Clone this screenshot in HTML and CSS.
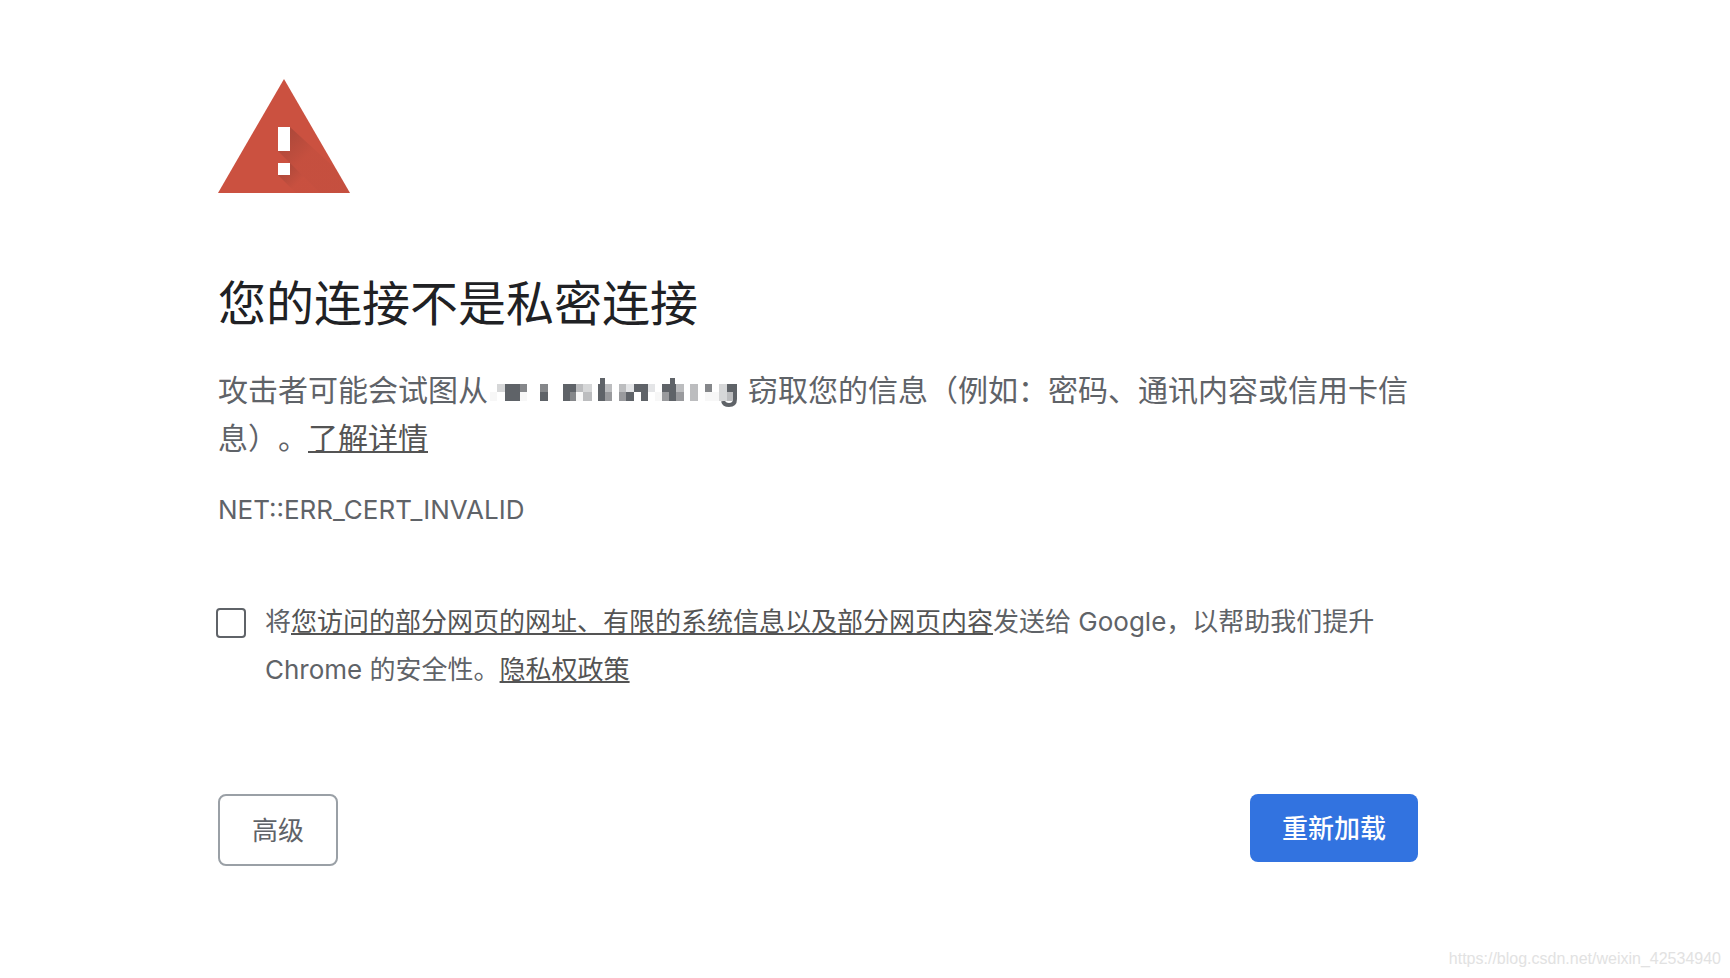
FILE: index.html
```html
<!DOCTYPE html>
<html lang="zh-CN">
<head>
  <meta charset="UTF-8">
  <meta name="viewport" content="width=device-width, initial-scale=1.0">
  <title>隐私设置错误</title>
  <link rel="stylesheet" href="styles.css">
</head>
<body>
  <main class="interstitial">
    <svg class="icon" viewBox="0 0 132 114" aria-hidden="true">
      <defs>
        <linearGradient id="shade1" gradientUnits="userSpaceOnUse" x1="66" y1="60" x2="86" y2="80">
          <stop offset="0" stop-color="#3e2723" stop-opacity=".2"/>
          <stop offset="1" stop-color="#3e2723" stop-opacity=".04"/>
        </linearGradient>
        <linearGradient id="shade2" gradientUnits="userSpaceOnUse" x1="66" y1="90" x2="80" y2="104">
          <stop offset="0" stop-color="#3e2723" stop-opacity=".2"/>
          <stop offset="1" stop-color="#3e2723" stop-opacity=".02"/>
        </linearGradient>
      </defs>
      <path d="M66 0L132 114H0z" fill="#cb5140"/>
      <path d="M72 48L119 91L132 114H102L60 72z" fill="url(#shade1)"/>
      <path d="M72 84L102 114H78L60 96z" fill="url(#shade2)"/>
      <path d="M60 48h12v24H60zM60 84h12v12H60z" fill="#fff"/>
    </svg>

    <h1>您的连接不是私密连接</h1>
    <p class="message">攻击者可能会试图从<svg class="host" viewBox="0 0 260 30" aria-hidden="true" shape-rendering="crispEdges">
        <g fill="#5f6368">
          <path d="M17 7h15v17H17zM52 15h8v9h-8zM75 7h13v8H75zM75 15h7v9h-7z"/>
          <path d="M110 7h7v17h-7zM112 1h5v6h-5zM138 15h8v9h-8zM146 7h14v8h-14zM153 15h7v9h-7z"/>
          <path d="M174 7h14v8h-14zM181 15h7v9h-7zM182 1h5v6h-5zM239 7h6v8h-6z"/>
        </g>
        <path d="M247 7V22Q247 28 241 28Q236 28 235 24" fill="none" stroke="#5f6368" stroke-width="4" shape-rendering="auto"/>
        <g fill="#85878a">
          <path d="M32 7h7v8h-7zM52 7h8v8h-8zM82 15h6v9h-6zM217 7h7v8h-7z"/>
        </g>
        <g fill="#999a9d">
          <path d="M117 15h7v9h-7zM131 15h7v9h-7zM174 15h7v9h-7zM188 15h8v9h-8z"/>
        </g>
        <g fill="#bcbdbf">
          <path d="M88 7h7v8h-7zM95 15h9v9h-9zM117 7h7v8h-7zM131 7h7v8h-7zM188 7h8v8h-8zM202 7h8v17h-8zM239 15h6v9h-6z"/>
        </g>
        <g fill="#d6d7d8">
          <path d="M9 7h8v8H9zM95 7h9v8h-9zM231 7h8v17h-8z"/>
        </g>
        <g fill="#e4e5e7">
          <path d="M138 7h8v8h-8zM160 7h7v8h-7z"/>
        </g>
        <g fill="#f7f7f7">
          <path d="M2 15h7v9H2zM32 15h7v9h-7zM88 15h7v9h-7zM167 15h7v9h-7zM217 15h14v9h-14z"/>
        </g>
      </svg>窃取您的信息（例如：密码、通讯内容或信用卡信息）。<a href="#">了解详情</a></p>
    <div class="error-code">NET::ERR_CERT_INVALID</div>

    <div class="opt-in">
      <input type="checkbox" id="report">
      <label for="report">将<a href="#">您访问的部分网页的网址、有限的系统信息以及部分网页内容</a>发送给 Google，以帮助我们提升 Chrome 的安全性。<a href="#">隐私权政策</a></label>
    </div>

    <div class="buttons">
      <button type="button" class="details">高级</button>
      <button type="button" class="primary">重新加载</button>
    </div>
  </main>
  <footer class="watermark">https://blog.csdn.net/weixin_42534940</footer>
</body>
</html>
```

FILE: styles.css
```css
* {
  box-sizing: border-box;
}

body {
  margin: 0;
  min-height: 100vh;
  display: flex;
  flex-direction: column;
  background: #fff;
  color: #5f6368;
  font-family: Inter, "Noto Sans CJK SC", sans-serif;
  font-size: 26px;
  line-height: 48px;
  text-spacing-trim: space-all;
}

.interstitial {
  flex: 1;
  max-width: 1518px;
  padding: 79px 100px 0 218px;
}

.icon {
  display: block;
  width: 132px;
}

h1 {
  margin: 75px 0 26px;
  color: #202124;
  font-size: 48px;
  font-weight: 400;
  line-height: 72px;
}

a {
  color: #545454;
  text-decoration: underline;
  text-decoration-thickness: 2px;
  text-decoration-skip-ink: none;
  text-underline-offset: 2px;
}

.message {
  margin: 0;
  font-size: 30px;
}

.host {
  width: 260px;
  height: 30px;
  vertical-align: -6px;
}

.error-code {
  margin-top: 24px;
}

.opt-in {
  display: flex;
  align-items: flex-start;
  gap: 19px;
  margin: 64px 0 100px -2px;
}

.opt-in input {
  appearance: none;
  flex: none;
  width: 30px;
  height: 30px;
  margin: 10px 0 0;
  border: 2px solid #5f6368;
  border-radius: 4px;
  background: #fff;
}

.opt-in input:checked {
  background: #3273e0;
}

.buttons {
  display: flex;
  justify-content: space-between;
  align-items: flex-start;
}

button {
  padding: 14px 32px;
  border: 0;
  border-radius: 8px;
  font: inherit;
  line-height: 40px;
  cursor: pointer;
}

.details {
  padding: 15px 32px 13px;
  border: 2px solid #9aa0a6;
  background: #fff;
  color: #5f6368;
}

.primary {
  padding: 15px 32px 13px;
  background: #3273e0;
  color: #fff;
  font-weight: 500;
}

.watermark {
  padding: 0 9px 7px;
  color: #e2e2e2;
  font-family: "Liberation Sans", Arial, sans-serif;
  font-size: 16px;
  line-height: 24px;
  text-align: right;
}
```
